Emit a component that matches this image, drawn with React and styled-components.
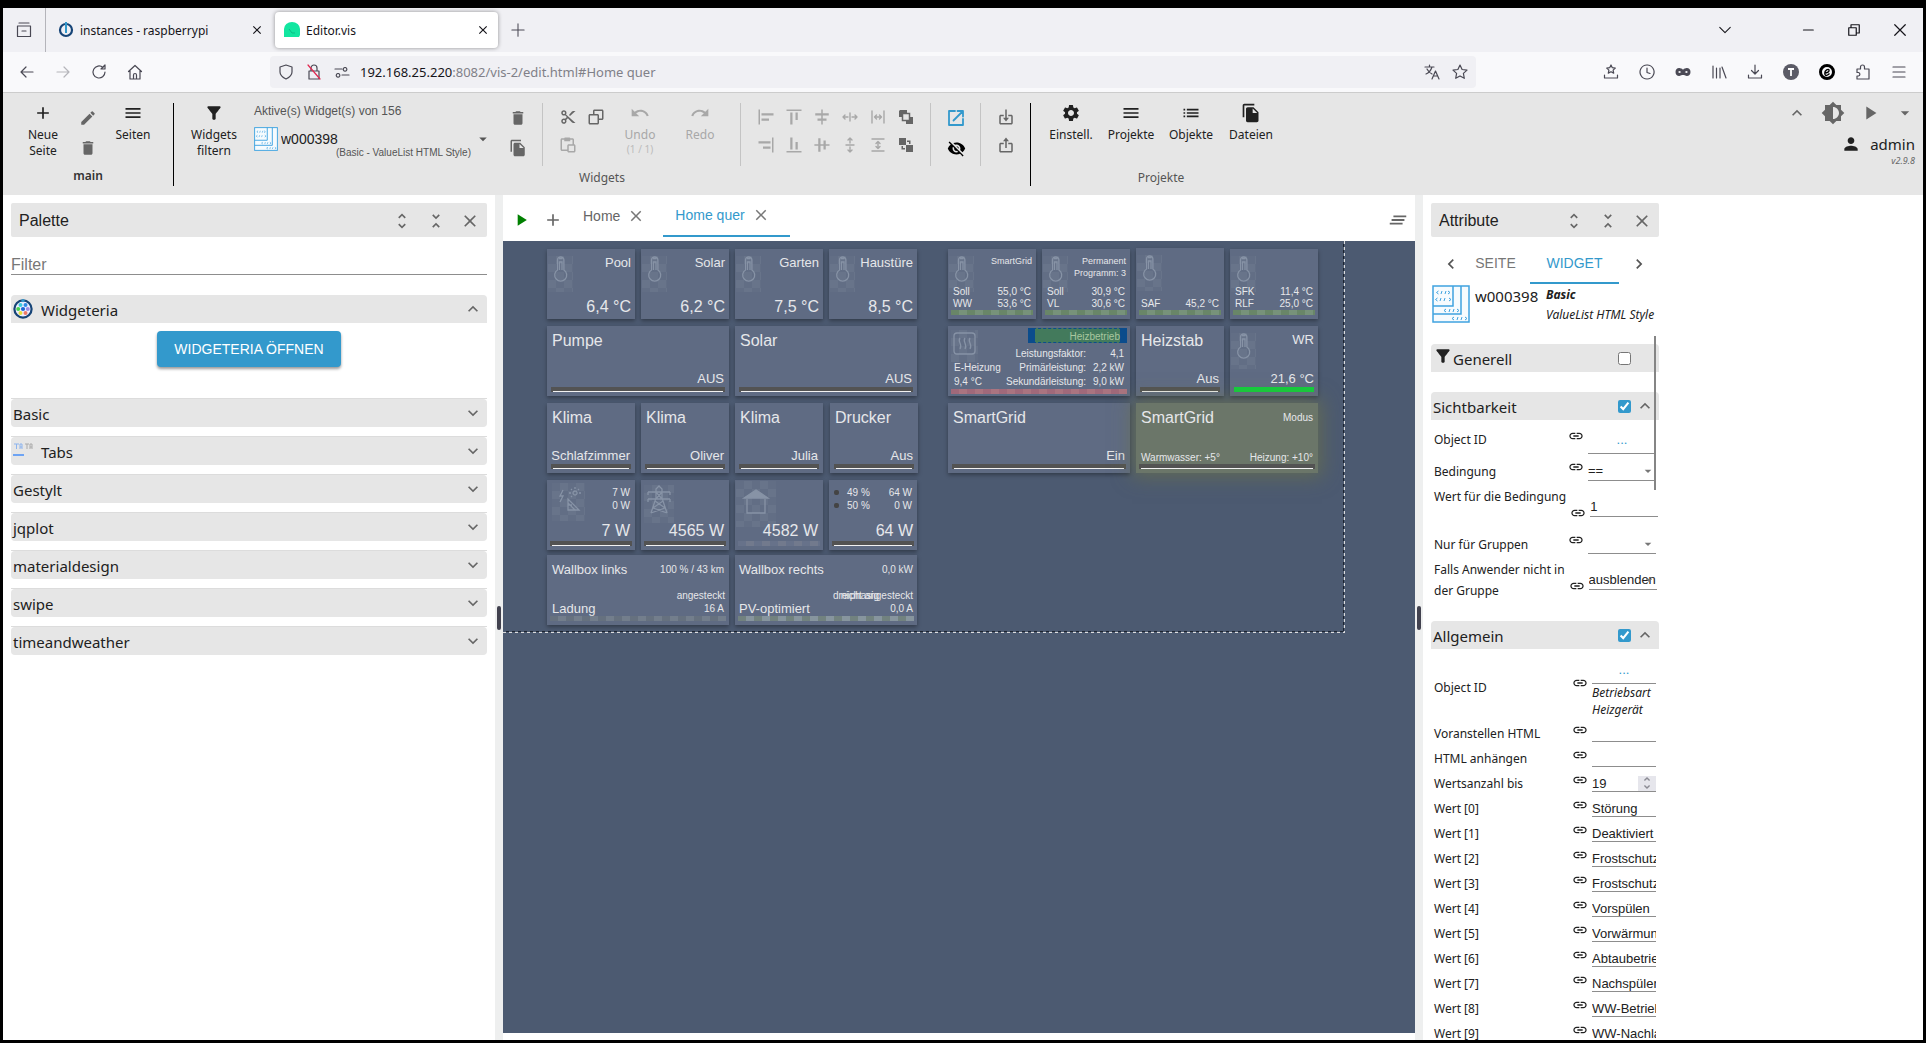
import React from 'react'
import styled, { createGlobalStyle, css } from 'styled-components'
import {
  MdAdd, MdAlignHorizontalCenter, MdAlignHorizontalLeft, MdAlignHorizontalRight,
  MdAlignVerticalBottom, MdAlignVerticalCenter, MdAlignVerticalTop, MdArrowDropDown,
  MdBrightness6, MdChevronLeft, MdChevronRight, MdClearAll, MdClose, MdDelete, MdEdit,
  MdExpandLess, MdExpandMore, MdFileCopy, MdFilterAlt, MdLink, MdList, MdMenu, MdPerson,
  MdPlayArrow, MdRedo, MdSettings, MdUndo, MdUnfoldLess, MdUnfoldMore, MdVisibilityOff,
} from 'react-icons/md'
import { BiCopy, BiCut, BiExport, BiImport, BiPaste } from 'react-icons/bi'

const ui = '"Noto Sans", "Open Sans", sans-serif'
const arial = '"Liberation Sans", Arial, sans-serif'
const blue = '#3399cc'

const GlobalStyle = createGlobalStyle`
  * { box-sizing: border-box; }
  body { margin: 0; background: #000; font-family: ${ui}; color: #212121; }
  button, input, select { font: inherit; color: inherit; }
  button { padding: 0; border: 0; background: none; }
  svg { display: block; flex: none; }
`

const Frame = styled.div`
  height: 100vh;
  padding: 8px 3px 3px;
  display: flex;
  flex-direction: column;
  overflow: hidden;
`

/* browser chrome */

const Line = styled.svg.attrs({ viewBox: '0 0 16 16', fill: 'none', stroke: 'currentColor' })`
  width: ${({ $size = 16 }) => $size}px;
  height: ${({ $size = 16 }) => $size}px;
  stroke-width: ${({ $w = 1.2 }) => $w};
  stroke-linecap: round;
  stroke-linejoin: round;
`

const TabBar = styled.header`
  flex: none;
  height: 44px;
  display: flex;
  align-items: center;
  background: #f0f0f4;
  color: #3a3944;
`

const ChromeButton = styled.button`
  width: ${({ $width = 36 }) => $width}px;
  height: 32px;
  display: flex;
  align-items: center;
  justify-content: center;
  color: ${({ $dim }) => ($dim ? '#b5b5ba' : '#4a4954')};
`

const ViewButton = styled(ChromeButton)`
  height: 44px;
  border-right: 1px solid #b4b4ba;
`

const BrowserTab = styled.div`
  width: 223px;
  height: 36px;
  margin-left: 3px;
  padding: 0 8px 0 9px;
  display: flex;
  align-items: center;
  gap: 6px;
  border-radius: 4px;
  font-size: 12px;
  color: #15141a;
  ${({ $active }) => $active && css`
    background: #fff;
    box-shadow: 0 0 4px rgb(0 0 0 / 40%);
  `}
  > span { flex: 1; white-space: nowrap; }
`

const WindowButtons = styled.div`
  margin-left: auto;
  display: flex;
  color: #15141a;
  button { color: inherit; }
`

const NavBar = styled.nav`
  flex: none;
  height: 41px;
  padding: 0 6px;
  display: flex;
  align-items: center;
  background: #f9f9fb;
  border-bottom: 1px solid #ccc;
`

const UrlBar = styled.div`
  flex: 1;
  height: 32px;
  margin: 0 117px 0 117px;
  padding: 0 2px;
  display: flex;
  align-items: center;
  background: #f0f0f4;
  border-radius: 4px;
  font-size: 13px;
  color: #808088;
  > p { flex: 1; margin: 0 0 0 4px; }
  b { font-weight: 400; color: #15141a; }
`

const NavIcons = styled.div`
  display: flex;
`

/* editor toolbar */

const Toolbar = styled.div`
  flex: none;
  height: 102px;
  padding-top: 10px;
  display: flex;
  background: #e6e6e6;
  font-size: 12px;
  line-height: 16px;
`

const Group = styled.section`
  height: 83px;
  display: flex;
  flex-direction: column;
  justify-content: space-between;
  border-right: ${({ $last }) => ($last ? 0 : '1px solid #000')};
  > div { display: flex; padding: 0 10px; }
  > footer {
    text-align: center;
    color: #555;
    ${({ $strong }) => $strong && 'font-weight: 600; color: #333; padding-bottom: 2px;'}
  }
`

const ToolButton = styled.button`
  width: ${({ $width = 60 }) => $width}px;
  height: 56px;
  display: flex;
  flex-direction: column;
  align-items: center;
  color: ${({ $off }) => ($off ? '#a8a8a8' : '#212121')};
  white-space: pre-line;
  svg { margin-bottom: 4px; }
  small { font-size: 10px; line-height: 12px; color: #bbb; }
`

const IconGrid = styled.div`
  display: grid;
  grid-template-columns: repeat(${({ $cols = 1 }) => $cols}, ${({ $cell = 28 }) => $cell}px);
  grid-auto-rows: ${({ $row = 28 }) => $row}px;
  color: ${({ $off }) => ($off ? '#a8a8a8' : '#666')};
  button { display: flex; align-items: center; justify-content: center; }
`

const Faded = styled.button`
  color: #a8a8a8;
`

const Split = styled.i`
  height: 63px;
  margin: 0 11px 0 10px;
  border-left: 1px solid #c4c4c4;
`

const ActiveWidgets = styled.div`
  width: 238px;
  margin: 0 12px 0 10px;
  font-family: ${arial};
  color: #555;
  > p { margin: 0 0 8px; }
`

const WidgetPicker = styled.div`
  display: flex;
  align-items: flex-start;
  gap: 3px;
  > div { width: 194px; padding-top: 3px; }
  > svg:last-child { margin-top: 3px; }
  select {
    display: block;
    width: 100%;
    height: 18px;
    padding: 0;
    border: 0;
    appearance: none;
    background: none;
    font-size: 14px;
    line-height: 18px;
    color: #212121;
  }
  small { display: block; font-size: 10px; line-height: 10px; text-align: right; }
`

const UserArea = styled.div`
  margin-left: auto;
  padding-right: 8px;
  display: flex;
  flex-direction: column;
  align-items: flex-end;
  color: #666;
  > div { display: flex; align-items: center; height: 20px; gap: 14px; }
  > p { display: flex; align-items: center; gap: 9px; height: 22px; margin: 10px 0 0; font-size: 15px; color: #212121; }
  small { font-size: 9px; line-height: 12px; font-style: italic; }
`

/* panels */

const Workspace = styled.main`
  flex: 1;
  min-height: 0;
  display: flex;
  background: #fff;
`

const Panel = styled.aside`
  flex: 0 0 ${({ $width }) => $width}px;
  padding: 8px;
  overflow: hidden;
`

const Splitter = styled.div`
  flex: 0 0 8px;
  padding-left: 2px;
  display: flex;
  align-items: center;
  background: #eeefef;
  &::before { content: ''; width: 4px; height: 24px; border-radius: 2px; background: #42424f; }
`

const PanelTitle = styled.header`
  height: 34px;
  padding: 1px 7px 0 8px;
  display: flex;
  align-items: center;
  gap: 14px;
  background: #e6e6e6;
  border-radius: 2px;
  font-family: ${arial};
  h2 { flex: 1; margin: 0; font-size: 16px; font-weight: 400; }
  button { color: #666; }
`

const FilterInput = styled.input`
  display: block;
  width: 100%;
  height: 22px;
  margin: 16px 0 20px;
  padding: 2px 0 0;
  border: 0;
  border-bottom: 1px solid #8d8d8d;
  outline: 0;
  font-family: ${arial};
  font-size: 16px;
  &::placeholder { color: #777; opacity: 1; }
`

const AccordionHeader = styled.button`
  width: 100%;
  height: 28px;
  padding: 0 4px 0 2px;
  display: flex;
  align-items: center;
  gap: 8px;
  background: #e6e6e6;
  border-radius: 4px;
  font-size: 15px;
  text-align: left;
  > span { flex: 1; padding-top: 1px; }
  > svg:last-child { color: #666; }
`

const Accordion = styled.section`
  margin-bottom: 9px;
  border-top: ${({ $open }) => ($open ? 0 : '1px solid #dcdcdc')};
  ${({ $open }) => $open && css`
    margin-bottom: 31px;
    ${AccordionHeader} { border-radius: 4px 4px 0 0; }
  `}
`

const OpenButton = styled.button`
  display: block;
  min-width: 184px;
  height: 36px;
  margin: 8px auto 0;
  padding: 0 16px;
  border-radius: 4px;
  background: ${blue};
  box-shadow: 0 2px 3px rgb(0 0 0 / 40%);
  color: #fff;
  font-family: ${arial};
  font-size: 14px;
`

/* view */

const Editor = styled.section`
  flex: 1;
  min-width: 0;
  display: flex;
  flex-direction: column;
`

const ViewTabs = styled.nav`
  flex: none;
  height: 46px;
  padding: 0 8px;
  display: flex;
  align-items: flex-start;
  font-family: ${arial};
  color: #666;
  > button { height: 50px; width: 32px; display: flex; align-items: center; justify-content: center; }
  > button:last-child { margin-left: auto; width: 18px; }
`

const PlayButton = styled.button`
  margin-left: -6px;
  color: green;
`

const ViewTab = styled.div`
  height: 42px;
  padding: 0 ${({ $active }) => ($active ? '20px 0 12px' : '18px 0 14px')};
  display: flex;
  align-items: center;
  gap: 7px;
  font-size: 14px;
  ${({ $active }) => $active && `color: ${blue}; border-bottom: 2px solid ${blue};`}
  button { color: #777; }
`

const Canvas = styled.div`
  position: relative;
  flex: 1;
  margin-bottom: 7px;
  overflow: hidden;
  background: #4c5a71;
  font-family: ${arial};
  color: #e6e7ea;
`

const ViewBorder = styled.div`
  position: absolute;
  left: 0;
  top: 0;
  width: 842px;
  height: 392px;
  background:
    repeating-linear-gradient(90deg, #ddd 0 3px, transparent 3px 6px) 0 100% / 100% 1px no-repeat,
    repeating-linear-gradient(90deg, transparent 0 3px, #1c232e 3px 6px) 0 calc(100% - 1px) / 100% 1px no-repeat,
    repeating-linear-gradient(#ddd 0 3px, transparent 3px 6px) 100% 0 / 1px 100% no-repeat,
    repeating-linear-gradient(transparent 0 3px, #1c232e 3px 6px) calc(100% - 1px) 0 / 1px 100% no-repeat;
`

// widgets are placed freely on the view, so they carry their own coordinates
const Tile = styled.article`
  position: absolute;
  z-index: 0;
  left: ${({ $x }) => $x}px;
  top: ${({ $y }) => $y}px;
  width: ${({ $w = 88 }) => $w}px;
  height: ${({ $h = 70 }) => $h}px;
  padding: 6px 3px 4px;
  display: flex;
  flex-direction: column;
  background: #5f6b83;
  box-shadow: 0 2px 4px rgb(0 0 0 / 35%);
  white-space: nowrap;
  ${({ $glow }) => $glow && css`
    background: #6b7669;
    box-shadow: 0 0 18px 4px rgb(112 116 66 / 60%);
  `}
`

const Spread = styled.div`
  display: flex;
  justify-content: ${({ $end }) => ($end ? 'flex-end' : 'space-between')};
  align-items: center;
  padding: 0 ${({ $inset = 1 }) => $inset}px;
  font-size: ${({ $size = 10 }) => $size}px;
  line-height: ${({ $lh = 12 }) => $lh}px;
  small { font-size: 10px; }
`

const Gap = styled.div`
  flex: 1;
`

const tones = {
  green: ['#698668', '#77927a'],
  red: ['#a0697a', '#aa7480'],
  faint: ['#67728a', '#727a8d'],
  grey: ['#66717f', '#737e8c'],
  pale: ['#72827f', '#87959e'],
}

const Bar = styled.div`
  flex: none;
  height: 5px;
  margin: 0 ${({ $inset = 0 }) => $inset}px;
  ${({ $tone }) => tones[$tone] && css`
    background: repeating-linear-gradient(90deg, ${tones[$tone][0]} 0 8px, ${tones[$tone][1]} 8px 16px);
  `}
  ${({ $tone }) => $tone === 'lime' && 'background: #10d13c;'}
  ${({ $tone }) => !$tone && css`
    padding: 4px 2px 0;
    background: #535353;
    &::after { content: ''; display: block; height: 1px; background: #f2f2f2; }
  `}
`

const Backdrop = styled.svg.attrs({ fill: 'none', stroke: '#8793a6', strokeWidth: 1.3, 'aria-hidden': true })`
  position: absolute;
  z-index: -1;
  left: ${({ $x = 1 }) => $x}px;
  top: ${({ $y = 7 }) => $y}px;
  background: repeating-conic-gradient(#68748a 0 25%, #626e85 0 50%) 0 0 / 16px 16px;
`

const HeatGrid = styled.div`
  display: grid;
  grid-template-columns: 52px 1fr 38px;
  line-height: 14px;
  font-size: 10px;
  padding: 15px 3px 0 3px;
  text-align: right;
  > :nth-child(3n + 1) { text-align: left; }
`

const Selection = styled.div`
  position: absolute;
  right: 3px;
  top: 2px;
  width: 99px;
  height: 15px;
  background: #437a5c;
  border: solid #0b4c8c;
  border-width: 0 7px;
  outline: 1px dashed #0b4c8c;
  outline-offset: -1px;
  color: #a9c79f;
  font-size: 10px;
  line-height: 17px;
  text-align: right;
`

const Overlap = styled.div`
  position: relative;
  height: 12px;
  font-size: 10px;
  line-height: 12px;
  text-align: right;
  padding-right: 1px;
  span { position: absolute; left: 95px; top: 0; }
`

const Battery = styled.i`
  width: 5px;
  height: 5px;
  margin: 0 8px 0 1px;
  border-radius: 2px;
  background: #444;
`

const BatteryRow = styled.div`
  display: flex;
  align-items: center;
  padding: 0 2px 0 1px;
  font-size: 10px;
  line-height: 13px;
  > b { flex: 1; font-weight: 400; }
`

/* attribute panel */

const Attributes = styled.div`
  width: 228px;
`

const AttributeTabs = styled.nav`
  height: 47px;
  padding: 0 10px;
  display: flex;
  align-items: stretch;
  font-family: ${arial};
  font-size: 14px;
  color: #555;
  button { padding-top: 6px; }
`

const AttributeTab = styled.button`
  flex: ${({ $active }) => ($active ? '0 0 89px' : 1)};
  margin-right: ${({ $active }) => ($active ? 10 : 0)}px;
  color: ${({ $active }) => ($active ? blue : '#777')};
  border-bottom: 2px solid ${({ $active }) => ($active ? blue : 'transparent')};
`

const WidgetInfo = styled.div`
  height: 60px;
  padding: 1px 0 0 1px;
  display: flex;
  gap: 5px;
  white-space: nowrap;
  > span { width: 66px; font-size: 15px; line-height: 22px; }
  em { font-size: 12px; line-height: 20px; }
`

const FieldGroup = styled.section`
  margin-bottom: ${({ $gap = 17 }) => $gap}px;
`

const FieldGroupTitle = styled.header`
  height: 28px;
  padding: 0 4px 0 2px;
  display: flex;
  align-items: center;
  background: #e6e6e6;
  border-radius: 4px 4px 0 0;
  > svg { align-self: flex-start; margin-top: 2px; }
  h3 { flex: 1; margin: 0; padding-top: 2px; font-size: 15px; font-weight: 400; }
  input { width: 13px; height: 13px; margin: 0 4px 0 0; accent-color: ${blue}; }
  button { width: 20px; height: 20px; color: #666; }
`

const Field = styled.div`
  height: ${({ $height }) => $height}px;
  padding: ${({ $help }) => ($help ? 4 : 0)}px 3px 0;
  display: grid;
  grid-template-columns: 1fr 16px ${({ $narrow }) => ($narrow ? 64 : 68)}px;
  column-gap: 4px;
  align-items: center;
  font-size: 12px;
  label { line-height: 21px; padding-bottom: ${({ $wrapped }) => ($wrapped ? 21 : 0)}px; white-space: nowrap; }
  > svg { margin: ${({ $tall }) => ($tall ? '13px 0 0' : '0 0 8px')}; }
`

const Control = styled.div`
  position: relative;
  input, select {
    display: block;
    width: 100%;
    height: ${({ $height }) => $height}px;
    padding: 0;
    border: 0;
    border-bottom: 1px solid #8d8d8d;
    border-radius: 0;
    outline: 0;
    appearance: none;
    background: none;
    font-family: ${arial};
    font-size: 13px;
  }
  input::placeholder { color: ${blue}; text-align: center; opacity: 1; }
  input::-webkit-inner-spin-button { display: none; }
  > em { display: block; font-size: 12px; line-height: 17px; }
  > svg { position: absolute; right: 0; top: 2px; color: #777; }
`

const Scrollbar = styled.i`
  position: absolute;
  right: 3px;
  top: -8px;
  width: 2px;
  height: 154px;
  background: #858585;
`

const ScrollBox = styled.div`
  position: relative;
`

const Stepper = styled.span`
  position: absolute;
  right: 0;
  top: 0;
  height: 15px;
  width: 18px;
  display: flex;
  align-items: center;
  justify-content: center;
  background: #e6e6ec;
  color: #8b8b94;
`

const DivIcon = ({ size }) => (
  <svg width={size} height={size} viewBox="0 0 38 38" fill="none" stroke="#3fa3e0" strokeWidth="1.5">
    <rect x="1" y="1" width="36" height="36" fill="#f6fbfe" />
    <path d="M1 29h28V1M1 21h20V1" />
    <path d="m6.500 6-2 1.500 2 1.500M9 9l1-3M13 9l1-3M16 6l2 1.500L16 9M5.500 13l-2 1.500 2 1.500M8 16l1-3M12 16l1-3M17 13l2 1.500-2 1.500M14 24l-2 1.500 2 1.500M17 27l1-3M21 27l1-3M25 24l2 1.500-2 1.500M22 32l-2 1.500 2 1.500M25 35l1-3M29 35l1-3M33 32l2 1.500-2 1.500" strokeWidth="1" />
  </svg>
)

const WidgeteriaIcon = () => (
  <svg width="20" height="20" viewBox="0 0 20 20">
    <circle cx="10" cy="10" r="8.6" fill="#eef" stroke="#164477" strokeWidth="2.2" />
    <circle cx="10" cy="1.6" r="1.6" fill="#3399cc" />
    <circle cx="10" cy="10" r="2.1" fill="#1b66d6" />
    <circle cx="7.5" cy="6" r="2" fill="#3ccbe0" />
    <circle cx="12.5" cy="6" r="2" fill="#2f8be6" />
    <circle cx="5.2" cy="10" r="2" fill="#45d24f" />
    <circle cx="14.8" cy="10" r="2" fill="#9d8be0" />
    <circle cx="7.5" cy="14" r="2" fill="#e8e03c" />
    <circle cx="12.5" cy="14" r="2" fill="#ee7a66" />
  </svg>
)

const TabsIcon = () => (
  <svg width="20" height="20" viewBox="0 0 20 20" fill="none">
    <path d="M1 3h5M3.5 3v5M7 8V3h2v5M7 6h2" stroke="#8db4ee" />
    <path d="M12 3h4M14 3v5M17 8V3h2v5M17 6h2" stroke="#aaa" />
    <path d="M0 14h11" stroke="#6ea4f4" strokeWidth="2" />
  </svg>
)

const Thermo = () => (
  <Backdrop width="25" height="36" viewBox="0 0 25 36">
    <path d="M9.500 14V4a3.200 3.200 0 0 1 6.400 0v10a6 6 0 1 1-6.400 0zM11.500 14V6h2.500v8M11 2.500h3.500" />
  </Backdrop>
)

const SolarIcon = () => (
  <Backdrop $x={5} $y={3} width="33" height="38" viewBox="0 0 33 38">
    <path d="m11 7-3 6h3l-3 6M16 16v11h11zM16 20l7 7M20 22h-4M23 8a2 2 0 1 0 .1 0M23 4v2M17 10h2M27 10h2M19 6l1 1M27 6l-1 1M19 14l1-1" />
  </Backdrop>
)

const PylonIcon = () => (
  <Backdrop $x={3} $y={5} width="30" height="38" viewBox="0 0 30 38">
    <path d="m7 28 5-15V4l3-3 3 3v9l5 15M4 7h22M4 14h22M4 7v3M26 7v3M4 14v3M26 14v3M12 7l6 7M18 7l-6 7M11 16l10 7M19 16 9 23M9 23l14 5M21 23 7 28" />
  </Backdrop>
)

const HouseIcon = () => (
  <Backdrop $x={1} $y={1} width="40" height="46" viewBox="0 0 40 46">
    <path d="m8 17 12-8 12 8z" fill="#8793a6" />
    <path d="M11 18v14h18V18" />
  </Backdrop>
)

const HeatIcon = () => (
  <Backdrop $x={3} $y={4} width="27" height="32" viewBox="0 0 27 32" strokeWidth="2">
    <rect x="3" y="3" width="21" height="21" rx="3" />
    <path d="M9 8c-3 4 3 6 0 11M14 8c-3 4 3 6 0 11M19 8c-3 4 3 6 0 11" />
  </Backdrop>
)

const OrderIcon = ({ front }) => (
  <svg width="16" height="16" viewBox="0 0 16 16" fill="currentColor">
    {front ? (
      <>
        <path d="M2 1h7v3H5v4H1V2zM15 15H8v-3h4V8h3z" />
        <rect x="4.500" y="4.500" width="7" height="7" fill="#e6e6e6" stroke="currentColor" strokeWidth="1.500" />
      </>
    ) : (
      <path d="M1 1h7v7H1zM8 8h7v7H8zM9 3.500h3.500V7H11V5H9zM3.500 9H5v2h2v1.500H3.500z" />
    )}
  </svg>
)

const SpreadIcon = ({ bars, vertical }) => (
  <Line $w={1.4} transform={vertical ? 'rotate(90)' : undefined}>
    {bars
      ? <path d="M2 2v12M14 2v12M4.500 8h7M6.500 6l-2 2 2 2M9.500 6l2 2-2 2" />
      : <path d="M8 4v8M1 8h5M10 8h5M3 6 1 8l2 2M13 6l2 2-2 2" />}
  </Line>
)

const browserIcons = {
  back: 'M14 8H2m5-5L2 8l5 5',
  forward: 'M2 8h12M9 3l5 5-5 5',
  reload: 'M14 8a6 6 0 1 1-2-4.500M14 1v4h-4z',
  home: 'm1.500 7.500 6.500-6 6.500 6M3 7v8h10V7M6.500 15v-4a1.500 1.500 0 0 1 3 0v4',
  shield: 'M8 1 2 3v5c0 3 3 5.500 6 7 3-1.500 6-4 6-7V3z',
  perms: 'M1 5h7M8 11h7M11 3.500a1.800 1.800 0 1 0 .1 0M4 9.500a1.800 1.800 0 1 0 .1 0',
  star: 'm8 1 2.100 4.500 4.900.6-3.600 3.300.9 4.900L8 11.900l-4.300 2.400.9-4.900L1 6.100l4.900-.6z',
  save: 'm8 1 1.300 2.700 3 .4-2.200 2 .6 3L8 7.700 5.300 9.100l.6-3-2.200-2 3-.4zM1.500 11v3h13v-3',
  clock: 'M8 1a7 7 0 1 0 .1 0M8 4v4.500l3 1',
  library: 'M2 2v12M5.500 4v10M9 4v10M11 3l4 11',
  download: 'M8 1v9M4.500 6.500 8 10l3.500-3.500M1.500 11v3h13v-3',
  puzzle: 'M2 5h3.500V3a2 2 0 0 1 4 0v2H14v10H2v-3h1.500a1.800 1.800 0 0 0 0-3.500H2z',
  menu: 'M2 3h12M2 8h12M2 13h12',
  down: 'm2 5 6 6 6-6',
}

const BrowserIcon = ({ name, size = 16 }) => <Line $size={size}><path d={browserIcons[name]} /></Line>

const Chrome = () => (
  <>
    <TabBar>
      <ViewButton $width={43} aria-label="Firefox View">
        <Line><path d="M3 1h10M1.500 4h13v10.500h-13zM6 9h4" /></Line>
      </ViewButton>
      <BrowserTab>
        <svg width="16" height="16" viewBox="0 0 16 16" fill="none">
          <circle cx="8" cy="8" r="6" stroke="#164477" strokeWidth="2.200" />
          <path d="M8 0v11" stroke="#3399cc" strokeWidth="2" />
        </svg>
        <span>instances - raspberrypi</span>
        <button aria-label="Tab schließen"><MdClose size={14} /></button>
      </BrowserTab>
      <BrowserTab $active>
        <svg width="16" height="16" viewBox="0 0 16 16">
          <path d="M0 15V7a8 7 0 0 1 16 0v6l-1 2z" fill="#12e6a0" />
          <path d="m5 7 3 4h3" stroke="#0bbd85" fill="none" />
        </svg>
        <span>Editor.vis</span>
        <button aria-label="Tab schließen"><MdClose size={14} /></button>
      </BrowserTab>
      <ChromeButton $width={40} aria-label="Neuer Tab"><Line $size={14}><path d="M8 1v14M1 8h14" /></Line></ChromeButton>
      <WindowButtons>
        <ChromeButton $width={46} aria-label="Alle Tabs"><BrowserIcon name="down" size={14} /></ChromeButton>
        <ChromeButton $width={37} />
        <ChromeButton $width={46} aria-label="Minimieren"><Line $size={12} $w={1.6}><path d="M2 8h13" /></Line></ChromeButton>
        <ChromeButton $width={46} aria-label="Verkleinern"><Line $size={12} $w={1.6}><path d="M1 5h10v10H1zM4 5V1h11v11h-4" /></Line></ChromeButton>
        <ChromeButton $width={46} aria-label="Schließen"><Line $size={12} $w={1.6}><path d="m1 1 14 14M15 1 1 15" /></Line></ChromeButton>
      </WindowButtons>
    </TabBar>
    <NavBar>
      <ChromeButton aria-label="Zurück"><BrowserIcon name="back" /></ChromeButton>
      <ChromeButton $dim aria-label="Vor"><BrowserIcon name="forward" /></ChromeButton>
      <ChromeButton aria-label="Neu laden"><BrowserIcon name="reload" /></ChromeButton>
      <ChromeButton aria-label="Startseite"><BrowserIcon name="home" /></ChromeButton>
      <UrlBar>
        <ChromeButton $width={28} aria-label="Schutz"><BrowserIcon name="shield" /></ChromeButton>
        <ChromeButton $width={28} aria-label="Nicht sicher">
          <Line>
            <path d="M3 7h10v8H3zM5 7V4a3 3 0 0 1 6 0v3" />
            <path d="m2 1 12 14" stroke="#e22850" />
          </Line>
        </ChromeButton>
        <ChromeButton $width={28} aria-label="Berechtigungen"><BrowserIcon name="perms" /></ChromeButton>
        <p><b>192.168.25.220</b>:8082/vis-2/edit.html#Home quer</p>
        <ChromeButton $width={28} aria-label="Übersetzen">
          <Line><path d="M1 3h9M5.500 1v2M2 10c3-1 5-4 6-7M3 5c1 2 3 4 5 5M8 15l3.500-8 3.500 8M9.500 12h4" /></Line>
        </ChromeButton>
        <ChromeButton $width={28} aria-label="Lesezeichen"><BrowserIcon name="star" /></ChromeButton>
      </UrlBar>
      <NavIcons>
        <ChromeButton aria-label="Lesezeichen-Menü"><BrowserIcon name="save" /></ChromeButton>
        <ChromeButton aria-label="Chronik"><BrowserIcon name="clock" /></ChromeButton>
        <ChromeButton aria-label="Maske">
          <Line $w={3}><path d="M8 8C6 5 2 4.500 2 8s4 3 6 0 6-3.500 6 0-4 3-6 0z" /></Line>
        </ChromeButton>
        <ChromeButton aria-label="Bibliothek"><BrowserIcon name="library" /></ChromeButton>
        <ChromeButton aria-label="Downloads"><BrowserIcon name="download" /></ChromeButton>
        <ChromeButton aria-label="Konto">
          <svg width="16" height="16" viewBox="0 0 16 16">
            <circle cx="8" cy="8" r="8" fill="#5b5b66" />
            <path d="M5 5h6M8 5v7" stroke="#fff" strokeWidth="1.800" />
          </svg>
        </ChromeButton>
        <ChromeButton aria-label="Erweiterung">
          <svg width="16" height="16" viewBox="0 0 16 16" fill="none">
            <circle cx="8" cy="8" r="6.500" stroke="#000" strokeWidth="3" />
            <path d="M5.500 9c3 0 5-1.500 4.500-3S5.500 6 5.800 9.500 9 11 10.500 9.500" stroke="#000" strokeWidth="1.400" />
          </svg>
        </ChromeButton>
        <ChromeButton aria-label="Erweiterungen"><BrowserIcon name="puzzle" /></ChromeButton>
        <ChromeButton aria-label="Menü"><BrowserIcon name="menu" /></ChromeButton>
      </NavIcons>
    </NavBar>
  </>
)

const EditorToolbar = () => (
  <Toolbar>
    <Group $strong>
      <div>
        <ToolButton><MdAdd size={20} />{'Neue\nSeite'}</ToolButton>
        <IconGrid $cell={30} $row={30}>
          <button aria-label="Bearbeiten"><MdEdit size={18} /></button>
          <button aria-label="Löschen"><MdDelete size={18} /></button>
        </IconGrid>
        <ToolButton><MdMenu size={20} />Seiten</ToolButton>
      </div>
      <footer>main</footer>
    </Group>
    <Group>
      <div>
        <ToolButton><MdFilterAlt size={20} />{'Widgets\nfiltern'}</ToolButton>
        <ActiveWidgets>
          <p>Aktive(s) Widget(s) von 156</p>
          <WidgetPicker>
            <DivIcon size={24} />
            <div>
              <select aria-label="Widget"><option>w000398</option></select>
              <small>(Basic - ValueList HTML Style)</small>
            </div>
            <MdArrowDropDown size={18} />
          </WidgetPicker>
        </ActiveWidgets>
        <IconGrid $row={30}>
          <button aria-label="Widget löschen"><MdDelete size={18} /></button>
          <button aria-label="Widget klonen"><MdFileCopy size={18} /></button>
        </IconGrid>
        <Split />
        <IconGrid $cols={2}>
          <button aria-label="Ausschneiden"><BiCut size={18} /></button>
          <button aria-label="Kopieren"><BiCopy size={18} /></button>
          <Faded aria-label="Einfügen"><BiPaste size={18} /></Faded>
        </IconGrid>
        <ToolButton $off><MdUndo size={20} />Undo<small>(1 / 1)</small></ToolButton>
        <ToolButton $off><MdRedo size={20} />Redo</ToolButton>
        <Split />
        <IconGrid $cols={6} $off>
          <button aria-label="Links ausrichten"><MdAlignHorizontalLeft size={18} /></button>
          <button aria-label="Oben ausrichten"><MdAlignVerticalTop size={18} /></button>
          <button aria-label="Horizontal zentrieren"><MdAlignHorizontalCenter size={18} /></button>
          <button aria-label="Horizontal verteilen"><SpreadIcon /></button>
          <button aria-label="Gleiche Breite"><SpreadIcon bars /></button>
          <IconGrid><button aria-label="Nach vorne"><OrderIcon front /></button></IconGrid>
          <button aria-label="Rechts ausrichten"><MdAlignHorizontalRight size={18} /></button>
          <button aria-label="Unten ausrichten"><MdAlignVerticalBottom size={18} /></button>
          <button aria-label="Vertikal zentrieren"><MdAlignVerticalCenter size={18} /></button>
          <button aria-label="Vertikal verteilen"><SpreadIcon vertical /></button>
          <button aria-label="Gleiche Höhe"><SpreadIcon bars vertical /></button>
          <IconGrid><button aria-label="Nach hinten"><OrderIcon /></button></IconGrid>
        </IconGrid>
        <Split />
        <IconGrid $row={30}>
          <button aria-label="In neuem Fenster">
            <Line $w={1.8} color={blue}><path d="M7 1H1v14h14V9M5.500 10.500 14 2M9.500 1H15v5.500" /></Line>
          </button>
          <button aria-label="Ausblenden"><MdVisibilityOff size={19} color="#000" /></button>
        </IconGrid>
        <Split />
        <IconGrid>
          <button aria-label="Importieren"><BiImport size={18} /></button>
          <button aria-label="Exportieren"><BiExport size={18} /></button>
        </IconGrid>
      </div>
      <footer>Widgets</footer>
    </Group>
    <Group $last>
      <div>
        <ToolButton><MdSettings size={20} />Einstell.</ToolButton>
        <ToolButton><MdMenu size={20} />Projekte</ToolButton>
        <ToolButton><MdList size={20} />Objekte</ToolButton>
        <ToolButton><MdFileCopy size={20} />Dateien</ToolButton>
      </div>
      <footer>Projekte</footer>
    </Group>
    <UserArea>
      <div>
        <MdExpandLess size={20} />
        <MdBrightness6 size={24} />
        <MdPlayArrow size={22} />
        <MdArrowDropDown size={20} />
      </div>
      <p><MdPerson size={20} />admin</p>
      <small>v2.9.8</small>
    </UserArea>
  </Toolbar>
)

const PanelHeader = ({ title }) => (
  <PanelTitle>
    <h2>{title}</h2>
    <button aria-label="Alle aufklappen"><MdUnfoldMore size={20} /></button>
    <button aria-label="Alle zuklappen"><MdUnfoldLess size={20} /></button>
    <button aria-label="Schließen"><MdClose size={20} /></button>
  </PanelTitle>
)

const sets = ['Basic', 'Tabs', 'Gestylt', 'jqplot', 'materialdesign', 'swipe', 'timeandweather']

const Palette = () => (
  <Panel $width={492}>
    <PanelHeader title="Palette" />
    <FilterInput aria-label="Filter" placeholder="Filter" />
    <Accordion $open>
      <AccordionHeader>
        <WidgeteriaIcon />
        <span>Widgeteria</span>
        <MdExpandLess size={20} />
      </AccordionHeader>
      <OpenButton>WIDGETERIA ÖFFNEN</OpenButton>
    </Accordion>
    {sets.map((name) => (
      <Accordion key={name}>
        <AccordionHeader>
          {name === 'Tabs' && <TabsIcon />}
          <span>{name}</span>
          <MdExpandMore size={20} />
        </AccordionHeader>
      </Accordion>
    ))}
  </Panel>
)

const temps = [
  { x: 44, name: 'Pool', value: '6,4 °C' },
  { x: 138, name: 'Solar', value: '6,2 °C' },
  { x: 232, name: 'Garten', value: '7,5 °C' },
  { x: 326, name: 'Haustüre', value: '8,5 °C' },
]

const switches = [
  { x: 44, y: 85, w: 182, name: 'Pumpe', state: 'AUS' },
  { x: 232, y: 85, w: 182, name: 'Solar', state: 'AUS' },
  { x: 44, y: 162, name: 'Klima', state: 'Schlafzimmer' },
  { x: 138, y: 162, name: 'Klima', state: 'Oliver' },
  { x: 232, y: 162, name: 'Klima', state: 'Julia' },
  { x: 327, y: 162, name: 'Drucker', state: 'Aus' },
  { x: 633, y: 85, name: 'Heizstab', state: 'Aus' },
  { x: 445, y: 162, w: 182, name: 'SmartGrid', state: 'Ein' },
]

const powers = [
  { x: 44, icon: <SolarIcon />, lines: ['7 W', '0 W'], value: '7 W' },
  { x: 138, icon: <PylonIcon />, lines: [], value: '4565 W' },
  { x: 232, icon: <HouseIcon />, lines: [], value: '4582 W', tone: 'faint' },
]

const heaters = [
  { x: 445, y: 8, notes: ['SmartGrid'], rows: [['Soll', '55,0 °C'], ['WW', '53,6 °C']] },
  { x: 539, y: 8, notes: ['Permanent', 'Programm: 3'], rows: [['Soll', '30,9 °C'], ['VL', '30,6 °C']] },
  { x: 633, y: 7, notes: [], rows: [['SAF', '45,2 °C']] },
  { x: 727, y: 8, notes: [], rows: [['SFK', '11,4 °C'], ['RLF', '25,0 °C']] },
]

const View = () => (
  <Canvas>
    <ViewBorder />
    {temps.map(({ x, name, value }) => (
      <Tile key={x} $x={x} $y={8}>
        <Thermo />
        <Spread $end $size={13} $lh={16}>{name}</Spread>
        <Gap />
        <Spread $end $size={16} $lh={16}>{value}</Spread>
      </Tile>
    ))}
    {switches.map(({ x, y, w, name, state }) => (
      <Tile key={`${x}-${y}`} $x={x} $y={y} $w={w}>
        <Spread $size={16} $lh={18} $inset={2}>{name}</Spread>
        <Gap />
        <Spread $end $size={13} $lh={16} $inset={2}>{state}</Spread>
        <Bar $inset={1} />
      </Tile>
    ))}
    {powers.map(({ x, icon, lines, value, tone }) => (
      <Tile key={x} $x={x} $y={239}>
        {icon}
        {lines.map((line) => <Spread key={line} $end $lh={13} $inset={2}>{line}</Spread>)}
        <Gap />
        <Spread $end $size={16} $lh={20} $inset={2}>{value}</Spread>
        <Bar $tone={tone} />
      </Tile>
    ))}
    <Tile $x={326} $y={239}>
      <BatteryRow><Battery /><b>49 %</b>64 W</BatteryRow>
      <BatteryRow><Battery /><b>50 %</b>0 W</BatteryRow>
      <Gap />
      <Spread $end $size={16} $lh={20}>64 W</Spread>
      <Bar />
    </Tile>
    <Tile $x={44} $y={314} $w={182}>
      <Spread $size={13} $lh={18} $inset={2}>Wallbox links<small>100 % / 43 km</small></Spread>
      <Gap />
      <Spread $end $inset={1}>angesteckt</Spread>
      <Spread $size={13} $lh={14} $inset={2}>Ladung<small>16 A</small></Spread>
      <Bar $tone="grey" />
    </Tile>
    <Tile $x={232} $y={314} $w={182}>
      <Spread $size={13} $lh={18} $inset={1}>Wallbox rechts<small>0,0 kW</small></Spread>
      <Gap />
      <Overlap><span>dreiphasig</span>nicht angesteckt</Overlap>
      <Spread $size={13} $lh={14} $inset={1}>PV-optimiert<small>0,0 A</small></Spread>
      <Bar $tone="pale" />
    </Tile>
    {heaters.map(({ x, y, notes, rows }) => (
      <Tile key={x} $x={x} $y={y} $h={78 - y}>
        <Thermo />
        {notes.map((note) => <Spread key={note} $end $size={9}>{note}</Spread>)}
        <Gap />
        {rows.map(([label, value]) => (
          <Spread key={label} $inset={2}><span>{label}</span><span>{value}</span></Spread>
        ))}
        <Bar $tone="green" />
      </Tile>
    ))}
    <Tile $x={445} $y={85} $w={182}>
      <HeatIcon />
      <Selection>Heizbetrieb</Selection>
      <HeatGrid>
        <span /><span>Leistungsfaktor:</span><span>4,1</span>
        <span>E-Heizung</span><span>Primärleistung:</span><span>2,2 kW</span>
        <span>9,4 °C</span><span>Sekundärleistung:</span><span>9,0 kW</span>
      </HeatGrid>
      <Gap />
      <Bar $tone="red" />
    </Tile>
    <Tile $x={727} $y={85}>
      <Thermo />
      <Spread $end $size={13} $lh={16}>WR</Spread>
      <Gap />
      <Spread $end $size={13} $lh={16}>21,6 °C</Spread>
      <Bar $tone="lime" $inset={1} />
    </Tile>
    <Tile $x={633} $y={162} $w={182} $glow>
      <Spread $size={16} $lh={18} $inset={2}>SmartGrid<small>Modus</small></Spread>
      <Gap />
      <Spread $inset={2}><span>Warmwasser: +5°</span><span>Heizung: +10°</span></Spread>
      <Bar />
    </Tile>
  </Canvas>
)

const FieldRow = ({ id, label, height, value, hint, help, options, type = 'text', narrow, wrapped, second }) => {
  const fieldHeight = hint ? 28 : narrow ? 16 : 20
  return (
    <Field $height={height} $narrow={narrow} $wrapped={wrapped} $tall={wrapped || second} $help={help}>
      <label htmlFor={id}>{label}{second && <><br />{second}</>}</label>
      <MdLink size={16} />
      <Control $height={fieldHeight}>
        {options ? (
          <>
            <select id={id}>{options.map((option) => <option key={option}>{option}</option>)}</select>
            <MdArrowDropDown size={16} />
          </>
        ) : (
          <input id={id} type={type} defaultValue={value} placeholder={hint} />
        )}
        {type === 'number' && <Stepper><MdUnfoldMore size={16} /></Stepper>}
        {help && <em>{help[0]}<br />{help[1]}</em>}
      </Control>
    </Field>
  )
}

const values = [
  'Störung', 'Deaktiviert', 'Frostschutz', 'Frostschutz', 'Vorspülen',
  'Vorwärmung', 'Abtaubetrieb', 'Nachspülen', 'WW-Betrieb', 'WW-Nachlauf',
]

const AttributePanel = () => (
  <Panel $width={500}>
    <Attributes>
      <PanelHeader title="Attribute" />
      <AttributeTabs>
        <button aria-label="Zurück"><MdChevronLeft size={20} /></button>
        <AttributeTab>SEITE</AttributeTab>
        <AttributeTab $active>WIDGET</AttributeTab>
        <button aria-label="Weiter"><MdChevronRight size={20} /></button>
      </AttributeTabs>
      <WidgetInfo>
        <DivIcon size={38} />
        <span>w000398</span>
        <em><b>Basic</b><br />ValueList HTML Style</em>
      </WidgetInfo>
      <ScrollBox>
        <FieldGroup $gap={20}>
          <FieldGroupTitle>
            <MdFilterAlt size={20} />
            <h3>Generell</h3>
            <input type="checkbox" aria-label="Generell" />
            <button aria-label="Generell öffnen" />
          </FieldGroupTitle>
        </FieldGroup>
        <FieldGroup $gap={16}>
          <FieldGroupTitle>
            <h3>Sichtbarkeit</h3>
            <input type="checkbox" aria-label="Sichtbarkeit" defaultChecked />
            <button aria-label="Zuklappen"><MdExpandLess size={20} /></button>
          </FieldGroupTitle>
          <FieldRow id="vis-oid" label="Object ID" height={39} hint="..." />
          <FieldRow id="vis-cond" label="Bedingung" height={22} options={['==']} />
          <FieldRow id="vis-val" label="Wert für die Bedingung" height={51} value="1" wrapped />
          <FieldRow id="vis-groups" label="Nur für Gruppen" height={22} options={['']} />
          <FieldRow id="vis-action" label="Falls Anwender nicht in" second="der Gruppe" height={51} options={['ausblenden']} />
        </FieldGroup>
        <FieldGroup>
          <FieldGroupTitle>
            <h3>Allgemein</h3>
            <input type="checkbox" aria-label="Allgemein" defaultChecked />
            <button aria-label="Zuklappen"><MdExpandLess size={20} /></button>
          </FieldGroupTitle>
          <FieldRow id="oid" label="Object ID" height={72} hint="..." help={['Betriebsart', 'Heizgerät']} narrow />
          <FieldRow id="prepend" label="Voranstellen HTML" height={25} narrow />
          <FieldRow id="append" label="HTML anhängen" height={25} narrow />
          <FieldRow id="count" label="Wertsanzahl bis" height={25} type="number" value="19" narrow />
          {values.map((value, i) => (
            <FieldRow key={i} id={`value-${i}`} label={`Wert [${i}]`} height={25} value={value} narrow />
          ))}
        </FieldGroup>
        <Scrollbar />
      </ScrollBox>
    </Attributes>
  </Panel>
)

const App = () => (
  <Frame>
    <GlobalStyle />
    <Chrome />
    <EditorToolbar />
    <Workspace>
      <Palette />
      <Splitter />
      <Editor>
        <ViewTabs>
          <PlayButton aria-label="Starten"><MdPlayArrow size={20} /></PlayButton>
          <button aria-label="Neue Seite"><MdAdd size={20} /></button>
          <ViewTab>Home<button aria-label="Home schließen"><MdClose size={18} /></button></ViewTab>
          <ViewTab $active>Home quer<button aria-label="Home quer schließen"><MdClose size={18} /></button></ViewTab>
          <button aria-label="Seiten anzeigen"><MdClearAll size={22} /></button>
        </ViewTabs>
        <View />
      </Editor>
      <Splitter />
      <AttributePanel />
    </Workspace>
  </Frame>
)

export default App
